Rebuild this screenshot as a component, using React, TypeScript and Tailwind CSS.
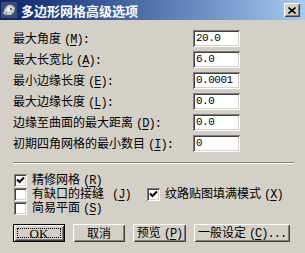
import React from "react";

const raised =
  "shadow-[inset_1px_1px_0_#ffffff,inset_-1px_-1px_0_#404040,inset_2px_2px_0_#d4d0c8,inset_-2px_-2px_0_#808080]";
const sunken =
  "shadow-[inset_1px_1px_0_#808080,inset_-1px_-1px_0_#ffffff,inset_2px_2px_0_#404040,inset_-2px_-2px_0_#d4d0c8]";

function Label({ text, k, tail = ":", gap = "ml-[3px]" }: { text: string; k: string; tail?: string; gap?: string }) {
  return (
    <span className="whitespace-nowrap">
      {text}
      <span className={`${gap} font-['Liberation_Mono',monospace] text-[12px] leading-none tracking-[-1px]`}>
        (<span className="underline underline-offset-2">{k}</span>){tail}
      </span>
    </span>
  );
}

function Field({ label, k, value }: { label: string; k: string; value: string }) {
  return (
    <div className="flex h-[17px] items-center">
      <div className="w-[180px] text-[12px] leading-[14px]">
        <Label text={label} k={k} />
      </div>
      <div className={`h-[17px] w-[47px] bg-white ${sunken} flex items-center pl-[3px]`}>
        <span className="font-['Liberation_Mono',monospace] text-[11px] tracking-[-0.5px] leading-none text-black">
          {value}
        </span>
      </div>
    </div>
  );
}

function Check({ checked, children }: { checked?: boolean; children: React.ReactNode }) {
  return (
    <div className="flex h-[14px] items-center">
      <div className={`relative h-[13px] w-[13px] shrink-0 bg-white ${sunken}`}>
        {checked && (
          <svg className="absolute left-[2px] top-[2px]" width="9" height="9" viewBox="0 0 9 9">
            <path d="M1 3.5 L3.5 6 L8 1.5" stroke="#000" strokeWidth="2" fill="none" />
          </svg>
        )}
      </div>
      <div className="ml-[5px] text-[12px] leading-[12px] whitespace-nowrap">{children}</div>
    </div>
  );
}

function Btn({ children, w, def }: { children: React.ReactNode; w: string; def?: boolean }) {
  return (
    <div
      className={`h-[18px] ${w} relative flex items-center justify-center bg-[#d4d0c8] text-[12px] leading-none ${
        def ? "border border-black" : ""
      } ${raised}`}
    >
      {def && <div className="absolute inset-[3px] border border-dotted border-black" />}
      <span className="relative">{children}</span>
    </div>
  );
}

export default function App() {
  return (
    <div className="h-[253px] w-[305px] overflow-hidden bg-[#d4d0c8] font-['Noto_Sans_CJK_SC','Noto_Sans',sans-serif] text-black">
      {/* title bar */}
      <div className="flex h-[20px] items-center bg-gradient-to-r from-[#0a246a] to-[#a6caf0] pl-[1px] pr-[5px]">
        <svg width="16" height="16" viewBox="0 0 16 16">
          <rect x="0" y="0" width="16" height="16" fill="#3a4e6e" />
          <path d="M2 12 L4 6 L7 3 L11 3 L14 6 L13 10 L10 13 L6 13 Z" fill="#c8c8c8" />
          <path d="M5 7 L8 5 L11 6 L10 9 L7 10 Z" fill="#f0f0f0" />
          <path d="M3 13 L6 10 L5 14 Z" fill="#808080" />
          <circle cx="10" cy="7" r="1" fill="#404040" />
        </svg>
        <span className="ml-[4px] text-[13px] font-bold leading-none text-white">多边形网格高级选项</span>
        <div className={`ml-auto flex h-[14px] w-[16px] items-center justify-center bg-[#d4d0c8] ${raised}`}>
          <svg width="8" height="7" viewBox="0 0 8 7">
            <path d="M0.5 0.5 L7.5 6.5 M7.5 0.5 L0.5 6.5" stroke="#000" strokeWidth="1.6" />
          </svg>
        </div>
      </div>

      {/* body */}
      <div className="pl-[13px] pt-[10px]">
        <div className="flex flex-col gap-[4px]">
          <Field label="最大角度" k="M" value="20.0" />
          <Field label="最大长宽比" k="A" value="6.0" />
          <Field label="最小边缘长度" k="E" value="0.0001" />
          <Field label="最大边缘长度" k="L" value="0.0" />
          <Field label="边缘至曲面的最大距离" k="D" value="0.0" />
          <Field label="初期四角网格的最小数目" k="I" value="0" />
        </div>

        <div className="mt-[10px] h-[2px] w-[281px] border-t border-b border-t-[#808080] border-b-white" />

        <div className="mt-[9px] flex flex-col">
          <div className="pl-[1px]">
            <Check checked>
              <Label text="精修网格" k="R" tail="" />
            </Check>
          </div>
          <div className="flex pl-[1px]">
            <div className="w-[133px]">
              <Check>
                <Label text="有缺口的接缝" k="J" tail="" gap="ml-[8px]" />
              </Check>
            </div>
            <Check checked>
              <Label text="纹路贴图填满模式" k="X" tail="" />
            </Check>
          </div>
          <div className="pl-[1px]">
            <Check>
              <Label text="简易平面" k="S" tail="" />
            </Check>
          </div>
        </div>

        <div className="mt-[9px] flex gap-[8px]">
          <Btn w="w-[52px]" def>
            <span className="font-['Liberation_Serif',serif] text-[13px]">OK</span>
          </Btn>
          <Btn w="w-[52px]">取消</Btn>
          <Btn w="w-[53px]">
            <Label text="预览" k="P" tail="" />
          </Btn>
          <Btn w="w-[96px]">
            <Label text="一般设定" k="C" tail="..." />
          </Btn>
        </div>
      </div>
    </div>
  );
}
